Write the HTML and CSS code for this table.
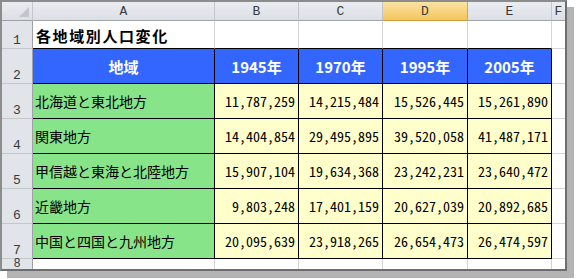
FILE: index.html
```html
<!DOCTYPE html>
<html lang="ja">
<head>
<meta charset="utf-8">
<title>各地域別人口変化</title>
<link rel="stylesheet" href="styles.css">
</head>
<body>
<div class="frame">
  <div class="sheet">
    <div class="ch corner"><svg width="10" height="10" viewBox="0 0 10 10"><polygon points="10,0 10,10 0,10" fill="#c2c5ca"/></svg></div>
    <div class="ch">A</div>
    <div class="ch">B</div>
    <div class="ch">C</div>
    <div class="ch sel">D</div>
    <div class="ch">E</div>
    <div class="ch last">F</div>

    <div class="rh r1">1</div>
    <div class="c r1 title tb">各地域別人口変化</div>
    <div class="c r1 tb"></div>
    <div class="c r1 tb"></div>
    <div class="c r1 tb"></div>
    <div class="c r1 tb"></div>
    <div class="c r1 lastc"></div>

    <div class="rh r2">2</div>
    <div class="c r2 t head">地域</div>
    <div class="c r2 t head">1945年</div>
    <div class="c r2 t head">1970年</div>
    <div class="c r2 t head">1995年</div>
    <div class="c r2 t head">2005年</div>
    <div class="c r2 lastc"></div>

    <div class="rh r3">3</div>
    <div class="c r3 t name">北海道と東北地方</div>
    <div class="c r3 t num">11,787,259</div>
    <div class="c r3 t num">14,215,484</div>
    <div class="c r3 t num">15,526,445</div>
    <div class="c r3 t num">15,261,890</div>
    <div class="c r3 lastc"></div>

    <div class="rh r3">4</div>
    <div class="c r3 t name">関東地方</div>
    <div class="c r3 t num">14,404,854</div>
    <div class="c r3 t num">29,495,895</div>
    <div class="c r3 t num">39,520,058</div>
    <div class="c r3 t num">41,487,171</div>
    <div class="c r3 lastc"></div>

    <div class="rh r3">5</div>
    <div class="c r3 t name">甲信越と東海と北陸地方</div>
    <div class="c r3 t num">15,907,104</div>
    <div class="c r3 t num">19,634,368</div>
    <div class="c r3 t num">23,242,231</div>
    <div class="c r3 t num">23,640,472</div>
    <div class="c r3 lastc"></div>

    <div class="rh r3">6</div>
    <div class="c r3 t name">近畿地方</div>
    <div class="c r3 t num">9,803,248</div>
    <div class="c r3 t num">17,401,159</div>
    <div class="c r3 t num">20,627,039</div>
    <div class="c r3 t num">20,892,685</div>
    <div class="c r3 lastc"></div>

    <div class="rh r3">7</div>
    <div class="c r3 t name">中国と四国と九州地方</div>
    <div class="c r3 t num">20,095,639</div>
    <div class="c r3 t num">23,918,265</div>
    <div class="c r3 t num">26,654,473</div>
    <div class="c r3 t num">26,474,597</div>
    <div class="c r3 lastc"></div>

    <div class="rh r8">8</div>
    <div class="c r8"></div>
    <div class="c r8"></div>
    <div class="c r8"></div>
    <div class="c r8"></div>
    <div class="c r8"></div>
    <div class="c r8 lastc"></div>
  </div>
</div>
</body>
</html>
```

FILE: styles.css
```css
html, body {
  margin: 0;
  padding: 0;
  background: #ffffff;
}
body {
  width: 576px;
  height: 279px;
  overflow: hidden;
}
.frame {
  width: 567px;
  height: 271px;
  box-sizing: border-box;
  border: 2px solid #6e6e6e;
  border-top-color: #8c8c8c;
  border-left-color: #8c8c8c;
  background: #ffffff;
  box-shadow: 7px 7px 0 #b4b4b4;
  overflow: hidden;
}
.sheet {
  display: grid;
  grid-template-columns: 31px 182px 84px 84px 85px 84px 13px;
  grid-template-rows: 19px 28px 35px 35px 35px 35px 35px 35px 10px;
}
.ch {
  box-sizing: border-box;
  background: linear-gradient(#e9ecf0, #dcdfe4);
  border-right: 1px solid #c3c6cb;
  border-bottom: 1px solid #9ea2a8;
  font-family: "Liberation Mono", monospace;
  font-size: 13px;
  color: #3a3a3a;
  display: flex;
  align-items: center;
  justify-content: center;
  line-height: 1;
}
.ch.corner {
  justify-content: flex-end;
  align-items: flex-end;
  padding: 0 3px 3px 0;
}
.ch.sel {
  background: linear-gradient(#fbe3a4, #f3c55d);
  border-right-color: #dba24a;
  border-bottom-color: #d79a3c;
}
.ch.last {
  border-right: none;
}
.rh {
  box-sizing: border-box;
  background: #e1e4e8;
  border-right: 1px solid #9ea2a8;
  border-bottom: 1px solid #c3c6cb;
  font-family: "Liberation Mono", monospace;
  font-size: 13px;
  color: #3a3a3a;
  display: flex;
  align-items: flex-end;
  justify-content: center;
  line-height: 1;
  padding-bottom: 1px;
}
.rh.r8 {
  border-bottom: none;
  padding-bottom: 0;
  align-items: flex-start;
  line-height: 10px;
  font-size: 12px;
}
.c {
  box-sizing: border-box;
  border-right: 1px solid #d4d4d4;
  border-bottom: 1px solid #d4d4d4;
  font-family: "Noto Sans CJK JP", sans-serif;
  font-size: 14px;
  color: #000;
  display: flex;
  align-items: center;
  white-space: nowrap;
  overflow: hidden;
}
.c.lastc {
  border-right: none;
}
.c.r8 {
  border-bottom: none;
}
.c.tb {
  border-bottom-color: #000;
}
.c.t {
  border-right-color: #000;
  border-bottom-color: #000;
}
.title {
  font-weight: bold;
  font-size: 15px;
  letter-spacing: 1.6px;
  padding-left: 3px;
  align-items: flex-end;
  padding-bottom: 2px;
}
.head {
  background: #3366ff;
  color: #ffffff;
  font-weight: bold;
  font-size: 15px;
  justify-content: center;
}
.name {
  background: #88e488;
  padding-left: 2px;
}
.num {
  background: #ffffcc;
  justify-content: flex-end;
  padding-right: 3px;
  font-family: "Noto Sans Mono CJK JP", "Liberation Mono", monospace;
  font-size: 14px;
}
```
